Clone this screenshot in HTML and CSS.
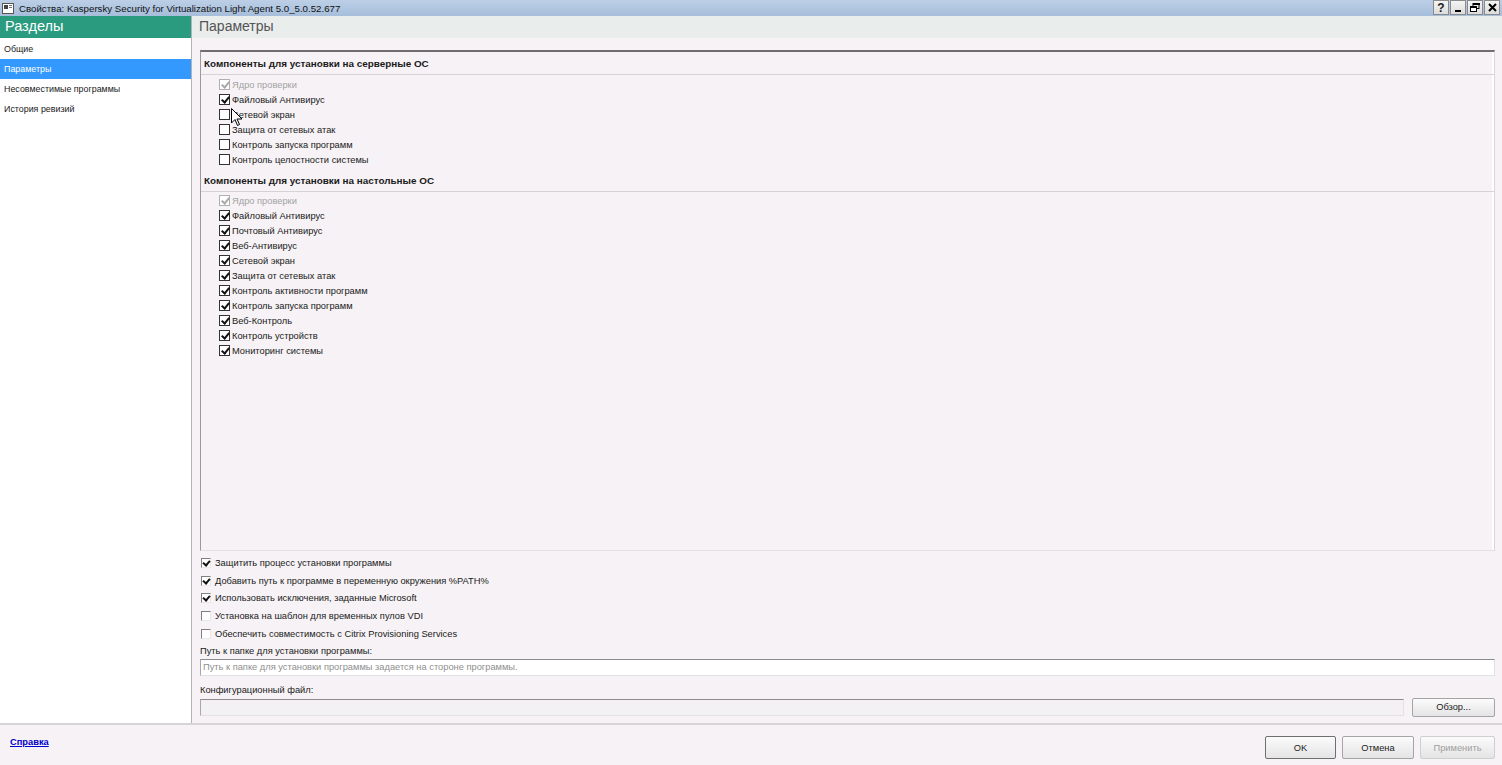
FILE: index.html
```html
<!DOCTYPE html>
<html lang="ru">
<head>
  <meta charset="UTF-8">
  <title>Свойства: Kaspersky Security for Virtualization Light Agent</title>
  <link rel="stylesheet" href="styles.css">
</head>
<body>

  <div id="titlebar">
    <div class="title-left">
      <svg class="app-icon" width="12" height="11" viewBox="0 0 12 11">
        <rect x="0.5" y="0.5" width="11" height="10" fill="#fff" stroke="#555"/>
        <rect x="2" y="2" width="4" height="4" fill="#444"/>
        <rect x="7" y="2" width="3" height="1" fill="#777"/>
        <rect x="7" y="4" width="3" height="1" fill="#777"/>
      </svg>
      <span>Свойства: Kaspersky Security for Virtualization Light Agent 5.0_5.0.52.677</span>
    </div>
    <div class="title-buttons">
      <div class="tb-btn">?</div>
      <div class="tb-btn">
        <svg width="8" height="8" viewBox="0 0 8 8"><rect x="1" y="6" width="6" height="2" fill="#000"/></svg>
      </div>
      <div class="tb-btn">
        <svg width="10" height="9" viewBox="0 0 10 9">
          <rect x="3" y="0.5" width="6" height="5" fill="none" stroke="#000"/>
          <rect x="3" y="0" width="7" height="2" fill="#000"/>
          <rect x="0.5" y="3.5" width="6" height="5" fill="#fff" stroke="#000"/>
          <rect x="0" y="3" width="7" height="2" fill="#000"/>
        </svg>
      </div>
      <div class="tb-btn">
        <svg width="9" height="9" viewBox="0 0 9 9"><path d="M1 1 L8 8 M8 1 L1 8" stroke="#000" stroke-width="2"/></svg>
      </div>
    </div>
  </div>

  <div id="window">
    <div id="content">
      <div id="sidebar">
        <div class="side-header">Разделы</div>
        <div class="side-list">
          <div class="side-item">Общие</div>
          <div class="side-item selected">Параметры</div>
          <div class="side-item">Несовместимые программы</div>
          <div class="side-item">История ревизий</div>
        </div>
      </div>

      <div id="main">
        <div class="main-header">Параметры</div>
        <div class="main-body">

          <div class="comp-box">
            <div class="group-title">Компоненты для установки на серверные ОС</div>
            <div class="group-list first">
              <div class="comp-item disabled"><span class="cb checked"></span>Ядро проверки</div>
              <div class="comp-item"><span class="cb checked"></span>Файловый Антивирус</div>
              <div class="comp-item"><span class="cb"></span>Сетевой экран</div>
              <div class="comp-item"><span class="cb"></span>Защита от сетевых атак</div>
              <div class="comp-item"><span class="cb"></span>Контроль запуска программ</div>
              <div class="comp-item"><span class="cb"></span>Контроль целостности системы</div>
            </div>
            <div class="group-title">Компоненты для установки на настольные ОС</div>
            <div class="group-list">
              <div class="comp-item disabled"><span class="cb checked"></span>Ядро проверки</div>
              <div class="comp-item"><span class="cb checked"></span>Файловый Антивирус</div>
              <div class="comp-item"><span class="cb checked"></span>Почтовый Антивирус</div>
              <div class="comp-item"><span class="cb checked"></span>Веб-Антивирус</div>
              <div class="comp-item"><span class="cb checked"></span>Сетевой экран</div>
              <div class="comp-item"><span class="cb checked"></span>Защита от сетевых атак</div>
              <div class="comp-item"><span class="cb checked"></span>Контроль активности программ</div>
              <div class="comp-item"><span class="cb checked"></span>Контроль запуска программ</div>
              <div class="comp-item"><span class="cb checked"></span>Веб-Контроль</div>
              <div class="comp-item"><span class="cb checked"></span>Контроль устройств</div>
              <div class="comp-item"><span class="cb checked"></span>Мониторинг системы</div>
            </div>
          </div>

          <div class="options">
            <div class="opt"><span class="fcb checked"></span>Защитить процесс установки программы</div>
            <div class="opt"><span class="fcb checked"></span>Добавить путь к программе в переменную окружения %PATH%</div>
            <div class="opt"><span class="fcb checked"></span>Использовать исключения, заданные Microsoft</div>
            <div class="opt"><span class="fcb"></span>Установка на шаблон для временных пулов VDI</div>
            <div class="opt"><span class="fcb"></span>Обеспечить совместимость с Citrix Provisioning Services</div>
          </div>

          <div class="field-label">Путь к папке для установки программы:</div>
          <div class="text-field placeholder">Путь к папке для установки программы задается на стороне программы.</div>

          <div class="field-label second">Конфигурационный файл:</div>
          <div class="file-row">
            <div class="text-field grow"></div>
            <div class="btn browse">Обзор...</div>
          </div>

        </div>
      </div>
    </div>

    <div id="footer">
      <a class="help-link" href="#">Справка</a>
      <div class="footer-buttons">
        <div class="btn default">OK</div>
        <div class="btn">Отмена</div>
        <div class="btn disabled">Применить</div>
      </div>
    </div>
  </div>

  <div class="cursor">
    <svg width="12" height="19" viewBox="0 0 12 19">
      <path d="M0.5 0.5 L0.5 15 L4 11.5 L6.5 17.5 L8.5 16.5 L6 11 L11 11 Z" fill="#fff" stroke="#000" stroke-width="1"/>
    </svg>
  </div>

</body>
</html>
```

FILE: styles.css
```css
* {
  margin: 0;
  padding: 0;
  box-sizing: border-box;
}

body {
  width: 1502px;
  height: 765px;
  overflow: hidden;
  font-family: 'Liberation Sans', Arial, sans-serif;
  font-size: 9.3px;
  color: #1a1a1a;
  background-color: #f6f2f5;
  position: relative;
}

#titlebar {
  height: 16px;
  display: flex;
  justify-content: space-between;
  align-items: center;
  background: linear-gradient(to bottom, #bccfe6, #a6bedb);
}

.title-left {
  display: flex;
  align-items: center;
  gap: 5px;
  padding-left: 2px;
  font-size: 9.7px;
  color: #111;
}

.title-buttons {
  display: flex;
  align-self: flex-start;
  gap: 1px;
  padding-right: 2px;
}

.tb-btn {
  width: 16px;
  height: 15px;
  background: linear-gradient(to bottom, #f4f4f4, #dcdcdc);
  border: 1px solid #8a8a8a;
  display: flex;
  align-items: center;
  justify-content: center;
  font-weight: bold;
  font-size: 12px;
}

#window {
  height: 749px;
  display: flex;
  flex-direction: column;
}

#content {
  display: flex;
  height: 709px;
  border-bottom: 2px solid #d6d4d6;
}

#sidebar {
  width: 192px;
  background-color: #fff;
  border-right: 1px solid #b4b4b4;
}

.side-header {
  height: 22px;
  background-color: #2b9b80;
  color: #fff;
  font-size: 14.5px;
  padding: 2px 0 0 5px;
}

.side-list {
  padding-top: 1px;
}

.side-item {
  height: 20px;
  line-height: 20px;
  padding-left: 4px;
  font-size: 8.9px;
}

.side-item.selected {
  background-color: #3399ff;
  color: #fff;
}

#main {
  flex: 1;
  display: flex;
  flex-direction: column;
}

.main-header {
  height: 22px;
  background-color: #e9eeed;
  color: #555;
  font-size: 14px;
  padding: 2px 0 0 7px;
}

.main-body {
  padding: 12px 7px 0 8px;
}

/* Components box */
.comp-box {
  height: 501px;
  border-top: 2px solid #6e6e6e;
  border-left: 1px solid #9a9a9a;
  border-right: 1px solid #d8d6d8;
  border-bottom: 1px solid #e2e0e2;
  box-shadow: inset -2px 0 0 #fff;
}

.group-title {
  height: 23px;
  line-height: 24px;
  padding-left: 3px;
  font-weight: bold;
  font-size: 9.9px;
  border-bottom: 1px solid #d4d4d4;
}

.group-list {
  padding: 1px 0 3px 18px;
}

.group-list.first {
  padding-top: 2px;
  padding-bottom: 2px;
}

.comp-item {
  height: 15px;
  display: flex;
  align-items: center;
  gap: 2px;
}

.comp-item.disabled {
  color: #a3a3a3;
}

.cb {
  width: 11px;
  height: 11px;
  border: 1px solid #333;
  background-color: #fff;
  position: relative;
  flex-shrink: 0;
}

.cb.checked::after {
  content: "";
  position: absolute;
  left: 3px;
  top: 0px;
  width: 3px;
  height: 6px;
  border-right: 2px solid #111;
  border-bottom: 2px solid #111;
  transform: rotate(40deg);
}

.comp-item.disabled .cb {
  border-color: #b0b0b0;
}

.comp-item.disabled .cb.checked::after {
  border-color: #a8a8a8;
}

/* Flat checkboxes */
.options {
  margin-top: 3px;
}

.opt {
  height: 17.75px;
  display: flex;
  align-items: center;
  gap: 4px;
  padding-left: 1px;
}

.fcb {
  width: 10px;
  height: 10px;
  border-top: 1px solid #808080;
  border-left: 1px solid #808080;
  border-right: 1px solid #e8e8e8;
  border-bottom: 1px solid #e8e8e8;
  background-color: #fff;
  position: relative;
}

.fcb.checked::after {
  content: "";
  position: absolute;
  left: 2px;
  top: 0px;
  width: 3px;
  height: 5px;
  border-right: 2px solid #111;
  border-bottom: 2px solid #111;
  transform: rotate(40deg);
}

.field-label {
  height: 14px;
  line-height: 14px;
  margin-top: 1px;
}

.field-label.second {
  margin-top: 7px;
}

.text-field {
  height: 17px;
  line-height: 15px;
  border-top: 1px solid #8c8c8c;
  border-left: 1px solid #a8a8a8;
  border-right: 1px solid #e2e2e2;
  border-bottom: 1px solid #e2e2e2;
  background-color: #fff;
  padding-left: 2px;
  margin-top: 1px;
}

.text-field.placeholder {
  color: #8f8f8f;
}

.file-row {
  display: flex;
  align-items: center;
  gap: 8px;
  margin-top: 1px;
}

.text-field.grow {
  flex: 1;
  margin-top: 0;
  background-color: #f3f1f3;
}

.btn {
  width: 72px;
  height: 23px;
  display: flex;
  align-items: center;
  justify-content: center;
  border: 1px solid #a5a5a5;
  border-radius: 2px;
  background: linear-gradient(to bottom, #fbfbfb, #e4e4e4);
  color: #222;
}

.btn.browse {
  width: 83px;
  height: 19px;
}

.btn.default {
  width: 71px;
  border-color: #6f6f6f;
}

.btn.disabled {
  width: 75px;
  color: #9e9e9e;
  border-color: #cfcfcf;
}

#footer {
  flex: 1;
  display: flex;
  justify-content: space-between;
  align-items: flex-start;
}

.help-link {
  margin: 12px 0 0 10px;
  color: #0000cc;
  font-weight: bold;
  text-decoration: underline;
}

.footer-buttons {
  display: flex;
  gap: 6px;
  margin: 11px 7px 0 0;
}

.cursor {
  position: absolute;
  left: 231px;
  top: 108px;
}
```
